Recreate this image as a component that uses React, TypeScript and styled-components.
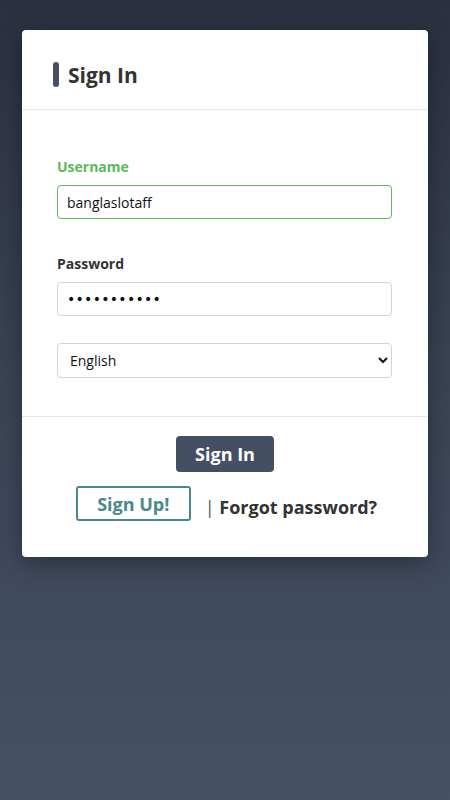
import { FC } from "react";
import styled, { createGlobalStyle } from "styled-components";

const colors = {
  slate: "#454f63",
  text: "#333333",
  green: "#5cb85c",
  teal: "#4a8989",
  line: "#e6e6e6",
  field: "#d4d4d4",
};

const GlobalStyle = createGlobalStyle`
  html, body {
    margin: 0;
    padding: 0;
    min-height: 100%;
  }
  body {
    min-height: 800px;
    background: linear-gradient(180deg, #2b3040 0%, #3a4254 45%, #465166 100%);
    font-family: "Open Sans", "Noto Sans", sans-serif;
    color: ${colors.text};
  }
`;

const App: FC = () => {
  return (
    <>
      <GlobalStyle />
      <Page>
        <Card>
          <Header>
            <Bar />
            <Title>Sign In</Title>
          </Header>

          <Body>
            <Group $space={35}>
              <Label htmlFor="username" $active>
                Username
              </Label>
              <Input id="username" defaultValue="banglaslotaff" $active />
            </Group>
            <Group $space={27}>
              <Label htmlFor="password">Password</Label>
              <PasswordInput
                id="password"
                type="password"
                defaultValue="12345678901"
              />
            </Group>
            <Select defaultValue="en">
              <option value="en">English</option>
            </Select>
          </Body>

          <Footer>
            <PrimaryButton type="button">Sign In</PrimaryButton>
            <Links>
              <OutlineButton type="button">Sign Up!</OutlineButton>
              <Forgot>
                <Pipe>|</Pipe> Forgot password?
              </Forgot>
            </Links>
          </Footer>
        </Card>
      </Page>
    </>
  );
};

export default App;

const Page = styled.div`
  padding: 30px 22px;
`;

const Card = styled.div`
  background: #ffffff;
  border-radius: 4px;
  box-shadow: 0 6px 24px rgba(0, 0, 0, 0.35);
`;

const Header = styled.div`
  display: flex;
  align-items: center;
  gap: 9px;
  height: 80px;
  padding: 10px 31px 0;
  box-sizing: border-box;
  border-bottom: 1px solid ${colors.line};
`;

const Bar = styled.span`
  width: 6px;
  height: 25px;
  border-radius: 3px;
  background: ${colors.slate};
`;

const Title = styled.h1`
  margin: 0;
  font-size: 21px;
  font-weight: 700;
  color: ${colors.text};
`;

const Body = styled.div`
  display: flex;
  flex-direction: column;
  padding: 47px 36px 38px 35px;
  border-bottom: 1px solid ${colors.line};
`;

const Group = styled.div<{ $space: number }>`
  display: flex;
  flex-direction: column;
  gap: 8px;
  margin-bottom: ${(p) => p.$space}px;
`;

const Label = styled.label<{ $active?: boolean }>`
  font-size: 14px;
  line-height: 20px;
  font-weight: 700;
  color: ${(p) => (p.$active ? colors.green : colors.text)};
`;

const Input = styled.input<{ $active?: boolean }>`
  box-sizing: border-box;
  height: 34px;
  padding: 0 9px;
  border: 1px solid ${(p) => (p.$active ? colors.green : colors.field)};
  border-radius: 4px;
  font-family: inherit;
  font-size: 14px;
  color: #111;
  outline: none;
`;

const PasswordInput = styled(Input)`
  font-family: "DejaVu Sans", sans-serif;
  letter-spacing: 0.3px;
`;

const Select = styled.select`
  box-sizing: border-box;
  height: 35px;
  padding: 0 8px;
  border: 1px solid ${colors.field};
  border-radius: 4px;
  background: #fff;
  font-family: inherit;
  font-size: 14px;
  color: #111;
`;

const Footer = styled.div`
  display: flex;
  flex-direction: column;
  align-items: center;
  gap: 14px;
  padding: 19px 20px 36px;
`;

const PrimaryButton = styled.button`
  width: 98px;
  height: 36px;
  border: none;
  border-radius: 4px;
  background: ${colors.slate};
  color: #fff;
  font-family: inherit;
  font-size: 18px;
  font-weight: 700;
  cursor: pointer;
`;

const Links = styled.div`
  display: flex;
  align-items: center;
  gap: 14px;
  margin-left: 3px;
`;

const OutlineButton = styled.button`
  width: 115px;
  height: 35px;
  border: 2px solid ${colors.teal};
  border-radius: 3px;
  background: #fff;
  color: ${colors.teal};
  font-family: inherit;
  font-size: 18px;
  font-weight: 700;
  cursor: pointer;
`;

const Forgot = styled.span`
  margin-top: 6px;
  font-size: 18px;
  font-weight: 700;
  color: ${colors.text};
`;

const Pipe = styled.span`
  font-weight: 400;
  color: #555;
`;
